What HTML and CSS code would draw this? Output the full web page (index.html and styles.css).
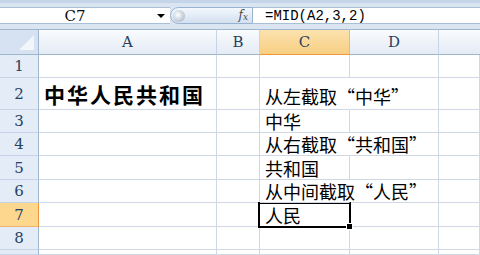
FILE: index.html
```html
<!DOCTYPE html>
<html lang="zh-CN">
<head>
    <meta charset="UTF-8">
    <title>MID</title>
    <link rel="stylesheet" href="styles.css">
</head>
<body>
    <!-- Barra de fórmulas -->
    <div class="fbar">
        <div class="namebox">
            <span class="ref">C7</span>
            <span class="arrow"></span>
        </div>
        <div class="pill">
            <span class="knob"></span>
            <span class="fx">f<sub>x</sub></span>
        </div>
        <div class="formula">=MID(A2,3,2)</div>
    </div>

    <!-- Planilha -->
    <div class="sheet">
        <div class="corner"><span class="tri"></span></div>
        <div class="colhead">A</div>
        <div class="colhead">B</div>
        <div class="colhead active">C</div>
        <div class="colhead">D</div>
        <div class="colhead last"></div>

        <div class="rowhead">1</div>
        <div class="cell"></div><div class="cell"></div><div class="cell"></div><div class="cell"></div><div class="cell"></div>

        <div class="rowhead">2</div>
        <div class="cell tall big">中华人民共和国</div><div class="cell tall"></div><div class="cell tall spill">从左截取“中华”</div><div class="cell tall"></div><div class="cell tall"></div>

        <div class="rowhead">3</div>
        <div class="cell"></div><div class="cell"></div><div class="cell">中华</div><div class="cell"></div><div class="cell"></div>

        <div class="rowhead">4</div>
        <div class="cell"></div><div class="cell"></div><div class="cell spill">从右截取“共和国”</div><div class="cell"></div><div class="cell"></div>

        <div class="rowhead">5</div>
        <div class="cell"></div><div class="cell"></div><div class="cell">共和国</div><div class="cell"></div><div class="cell"></div>

        <div class="rowhead">6</div>
        <div class="cell"></div><div class="cell"></div><div class="cell spill">从中间截取“人民”</div><div class="cell"></div><div class="cell"></div>

        <div class="rowhead active">7</div>
        <div class="cell"></div><div class="cell"></div><div class="cell selected">人民<span class="sel"><span class="handle"></span></span></div><div class="cell"></div><div class="cell"></div>

        <div class="rowhead">8</div>
        <div class="cell"></div><div class="cell"></div><div class="cell"></div><div class="cell"></div><div class="cell"></div>

        <div class="rowhead"></div>
        <div class="cell"></div><div class="cell"></div><div class="cell"></div><div class="cell"></div><div class="cell"></div>
    </div>
</body>
</html>
```

FILE: styles.css
```css
/* Estilo Global */
body {
    margin: 0;
    padding: 0;
    width: 480px;
    height: 255px;
    overflow: hidden;
    background: #fff;
    font-family: "Noto Sans CJK SC", sans-serif;
}

/* Barra de fórmulas */
.fbar {
    display: flex;
    height: 29px;
    box-sizing: border-box;
    padding: 4px 0 5px;
    background: #dbe5f1;
    border-top: 3px solid #c4d5ea;
}

.namebox {
    width: 170px;
    display: flex;
    align-items: center;
    background: #fff;
    border-top: 1px solid #a9bfd6;
    border-bottom: 1px solid #a9bfd6;
    box-sizing: border-box;
}

.namebox .ref {
    width: 150px;
    text-align: center;
    font-family: "DejaVu Serif", serif;
    font-size: 15px;
    line-height: 16px;
    color: #111;
}

.namebox .arrow {
    width: 0;
    height: 0;
    border-left: 4px solid transparent;
    border-right: 4px solid transparent;
    border-top: 4px solid #000;
    margin-left: 7px;
}

.pill {
    width: 83px;
    display: flex;
    align-items: center;
    justify-content: space-between;
    box-sizing: border-box;
    padding: 0 3px 0 2px;
    border: 1px solid #9ab1d0;
    border-radius: 11px 0 0 11px;
    background: linear-gradient(#f3f7fc, #d3e0f0);
}

.knob {
    width: 12px;
    height: 12px;
    border-radius: 50%;
    background: radial-gradient(circle at 40% 40%, #ffffff, #b7c3d2 70%, #9aa8ba);
}

.fx {
    font-family: "DejaVu Serif", serif;
    font-style: italic;
    font-size: 12px;
    line-height: 14px;
    color: #4a4a4a;
    margin-right: 1px;
}

.fx sub {
    font-size: 9px;
    vertical-align: -1px;
}

.formula {
    flex: 1;
    display: flex;
    align-items: center;
    padding-left: 12px;
    background: #fff;
    border-top: 1px solid #a9bfd6;
    border-bottom: 1px solid #a9bfd6;
    font-family: "Liberation Mono", monospace;
    font-size: 14px;
    line-height: 16px;
    color: #000;
}

/* Planilha */
.sheet {
    display: grid;
    grid-template-columns: 39px 178px 43px 90px 89px 1fr;
    grid-template-rows: 26px 23px 32px 23px 23px 24px 23px 24px 23px 1fr;
    height: 226px;
}

.corner {
    background: #d6e2f2;
    border-right: 1px solid #9eb6ce;
    border-bottom: 1px solid #9eb6ce;
    border-top: 1px solid #9eb6ce;
    position: relative;
}

.corner .tri {
    position: absolute;
    right: 4px;
    bottom: 4px;
    width: 0;
    height: 0;
    border-left: 15px solid transparent;
    border-bottom: 15px solid #f2f6fb;
}

.colhead {
    display: flex;
    align-items: center;
    justify-content: center;
    background: linear-gradient(#f9fbfd, #e4ebf5);
    border-top: 1px solid #9eb6ce;
    border-right: 1px solid #c4d3e5;
    border-bottom: 1px solid #9eb6ce;
    font-family: "DejaVu Serif", serif;
    font-size: 15px;
    line-height: 16px;
    color: #27415e;
}

.colhead.active {
    background: linear-gradient(#fbe2ae, #f8cf83);
    border-bottom: 1px solid #f29536;
    border-right: 1px solid #f2b56a;
}

.colhead.last {
    border-right: none;
}

.rowhead {
    display: flex;
    align-items: center;
    justify-content: center;
    background: #e4ecf7;
    border-right: 1px solid #9eb6ce;
    border-bottom: 1px solid #c4d3e5;
    font-family: "DejaVu Serif", serif;
    font-size: 15px;
    line-height: 16px;
    color: #27415e;
}

.rowhead.active {
    background: #fdd78e;
    border-right: 1px solid #f29536;
    border-bottom: 1px solid #f2b56a;
}

.cell {
    display: flex;
    align-items: flex-end;
    padding: 0 0 2px 5px;
    border-right: 1px solid #d0d7e5;
    border-bottom: 1px solid #d0d7e5;
    font-size: 18px;
    line-height: 18px;
    color: #000;
    white-space: nowrap;
    min-width: 0;
    overflow: visible;
}

.cell.tall {
    padding-bottom: 4px;
}

.cell.big {
    padding-left: 5px;
    font-size: 21px;
    line-height: 21px;
    font-weight: bold;
    letter-spacing: 2px;
}

.cell.spill {
    border-right-color: transparent;
    position: relative;
    z-index: 1;
}

.cell.selected {
    position: relative;
}

.sel {
    position: absolute;
    left: -2px;
    top: -1px;
    right: -2px;
    bottom: -2px;
    border: 2px solid #000;
}

.handle {
    position: absolute;
    right: -4px;
    bottom: -4px;
    width: 5px;
    height: 5px;
    background: #000;
    border: 1px solid #fff;
}
```
